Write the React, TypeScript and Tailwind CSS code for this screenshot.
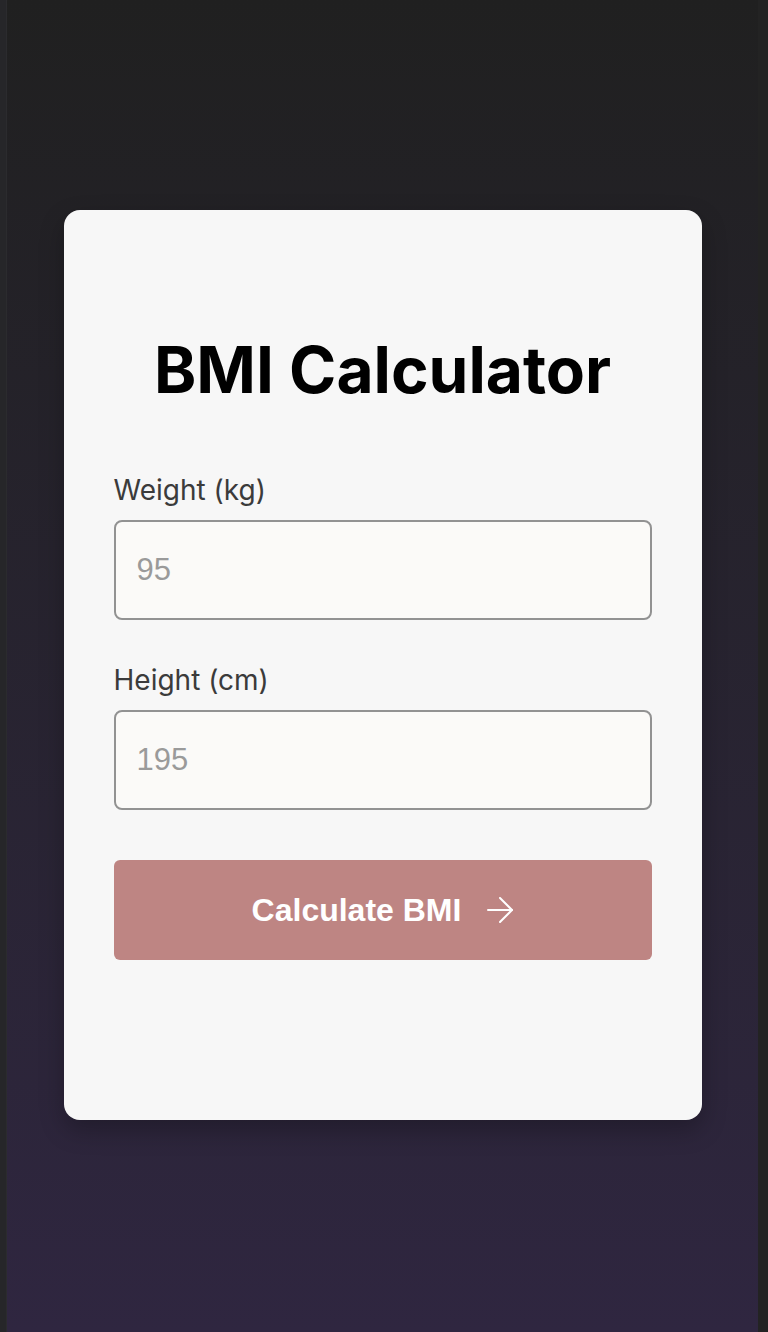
import React from "react";

export default function App() {
  return (
    <div className="flex h-[1332px] w-[768px] bg-[#232323]" style={{ fontFamily: "Inter, 'Liberation Sans', sans-serif" }}>
      <div className="w-[7px] bg-[#262629] border-r border-[#2b2b2e]" />
      <div className="flex w-[751px] items-center justify-center pb-[2px] bg-gradient-to-b from-[#202020] to-[#2f2640]">
        <div className="w-[638px] rounded-[16px] bg-[#f7f7f7] px-[50px] pt-[128px] pb-[160px] shadow-[0_10px_25px_rgba(0,0,0,0.25)]">
          <h1 className="text-center text-[64px] font-bold leading-none text-black">BMI Calculator</h1>
          <div className="mt-[70px] flex flex-col gap-[42px]">
            <div className="flex flex-col">
              <label className="mb-[11px] text-[28px] leading-[37px] text-[#3b3b3b]">Weight (kg)</label>
              <input
                type="number"
                placeholder="95"
                className="h-[100px] w-full rounded-[8px] border-2 border-[#929292] bg-[#fbfaf8] px-[21px] text-[31px] text-black outline-none placeholder:text-[#9a9a9a]"
                style={{ fontFamily: "'Liberation Sans', Arial, sans-serif" }}
              />
            </div>
            <div className="flex flex-col">
              <label className="mb-[11px] text-[28px] leading-[37px] text-[#3b3b3b]">Height (cm)</label>
              <input
                type="number"
                placeholder="195"
                className="h-[100px] w-full rounded-[8px] border-2 border-[#929292] bg-[#fbfaf8] px-[21px] text-[31px] text-black outline-none placeholder:text-[#9a9a9a]"
                style={{ fontFamily: "'Liberation Sans', Arial, sans-serif" }}
              />
            </div>
          </div>
          <button
            className="mt-[50px] flex h-[100px] w-full items-center justify-center gap-[26px] rounded-[6px] bg-[#be8583] text-[32px] font-bold text-white"
            style={{ fontFamily: "'Liberation Sans', Arial, sans-serif" }}
          >
            <span>Calculate BMI</span>
            <svg width="26" height="26" viewBox="0 0 26 26" fill="none" stroke="white" strokeWidth="2" strokeLinecap="round" strokeLinejoin="round">
              <path d="M1 13H25" />
              <path d="M13 1L25 13L13 25" />
            </svg>
          </button>
        </div>
      </div>
      <div className="w-[10px] bg-[#232323]" />
    </div>
  );
}
